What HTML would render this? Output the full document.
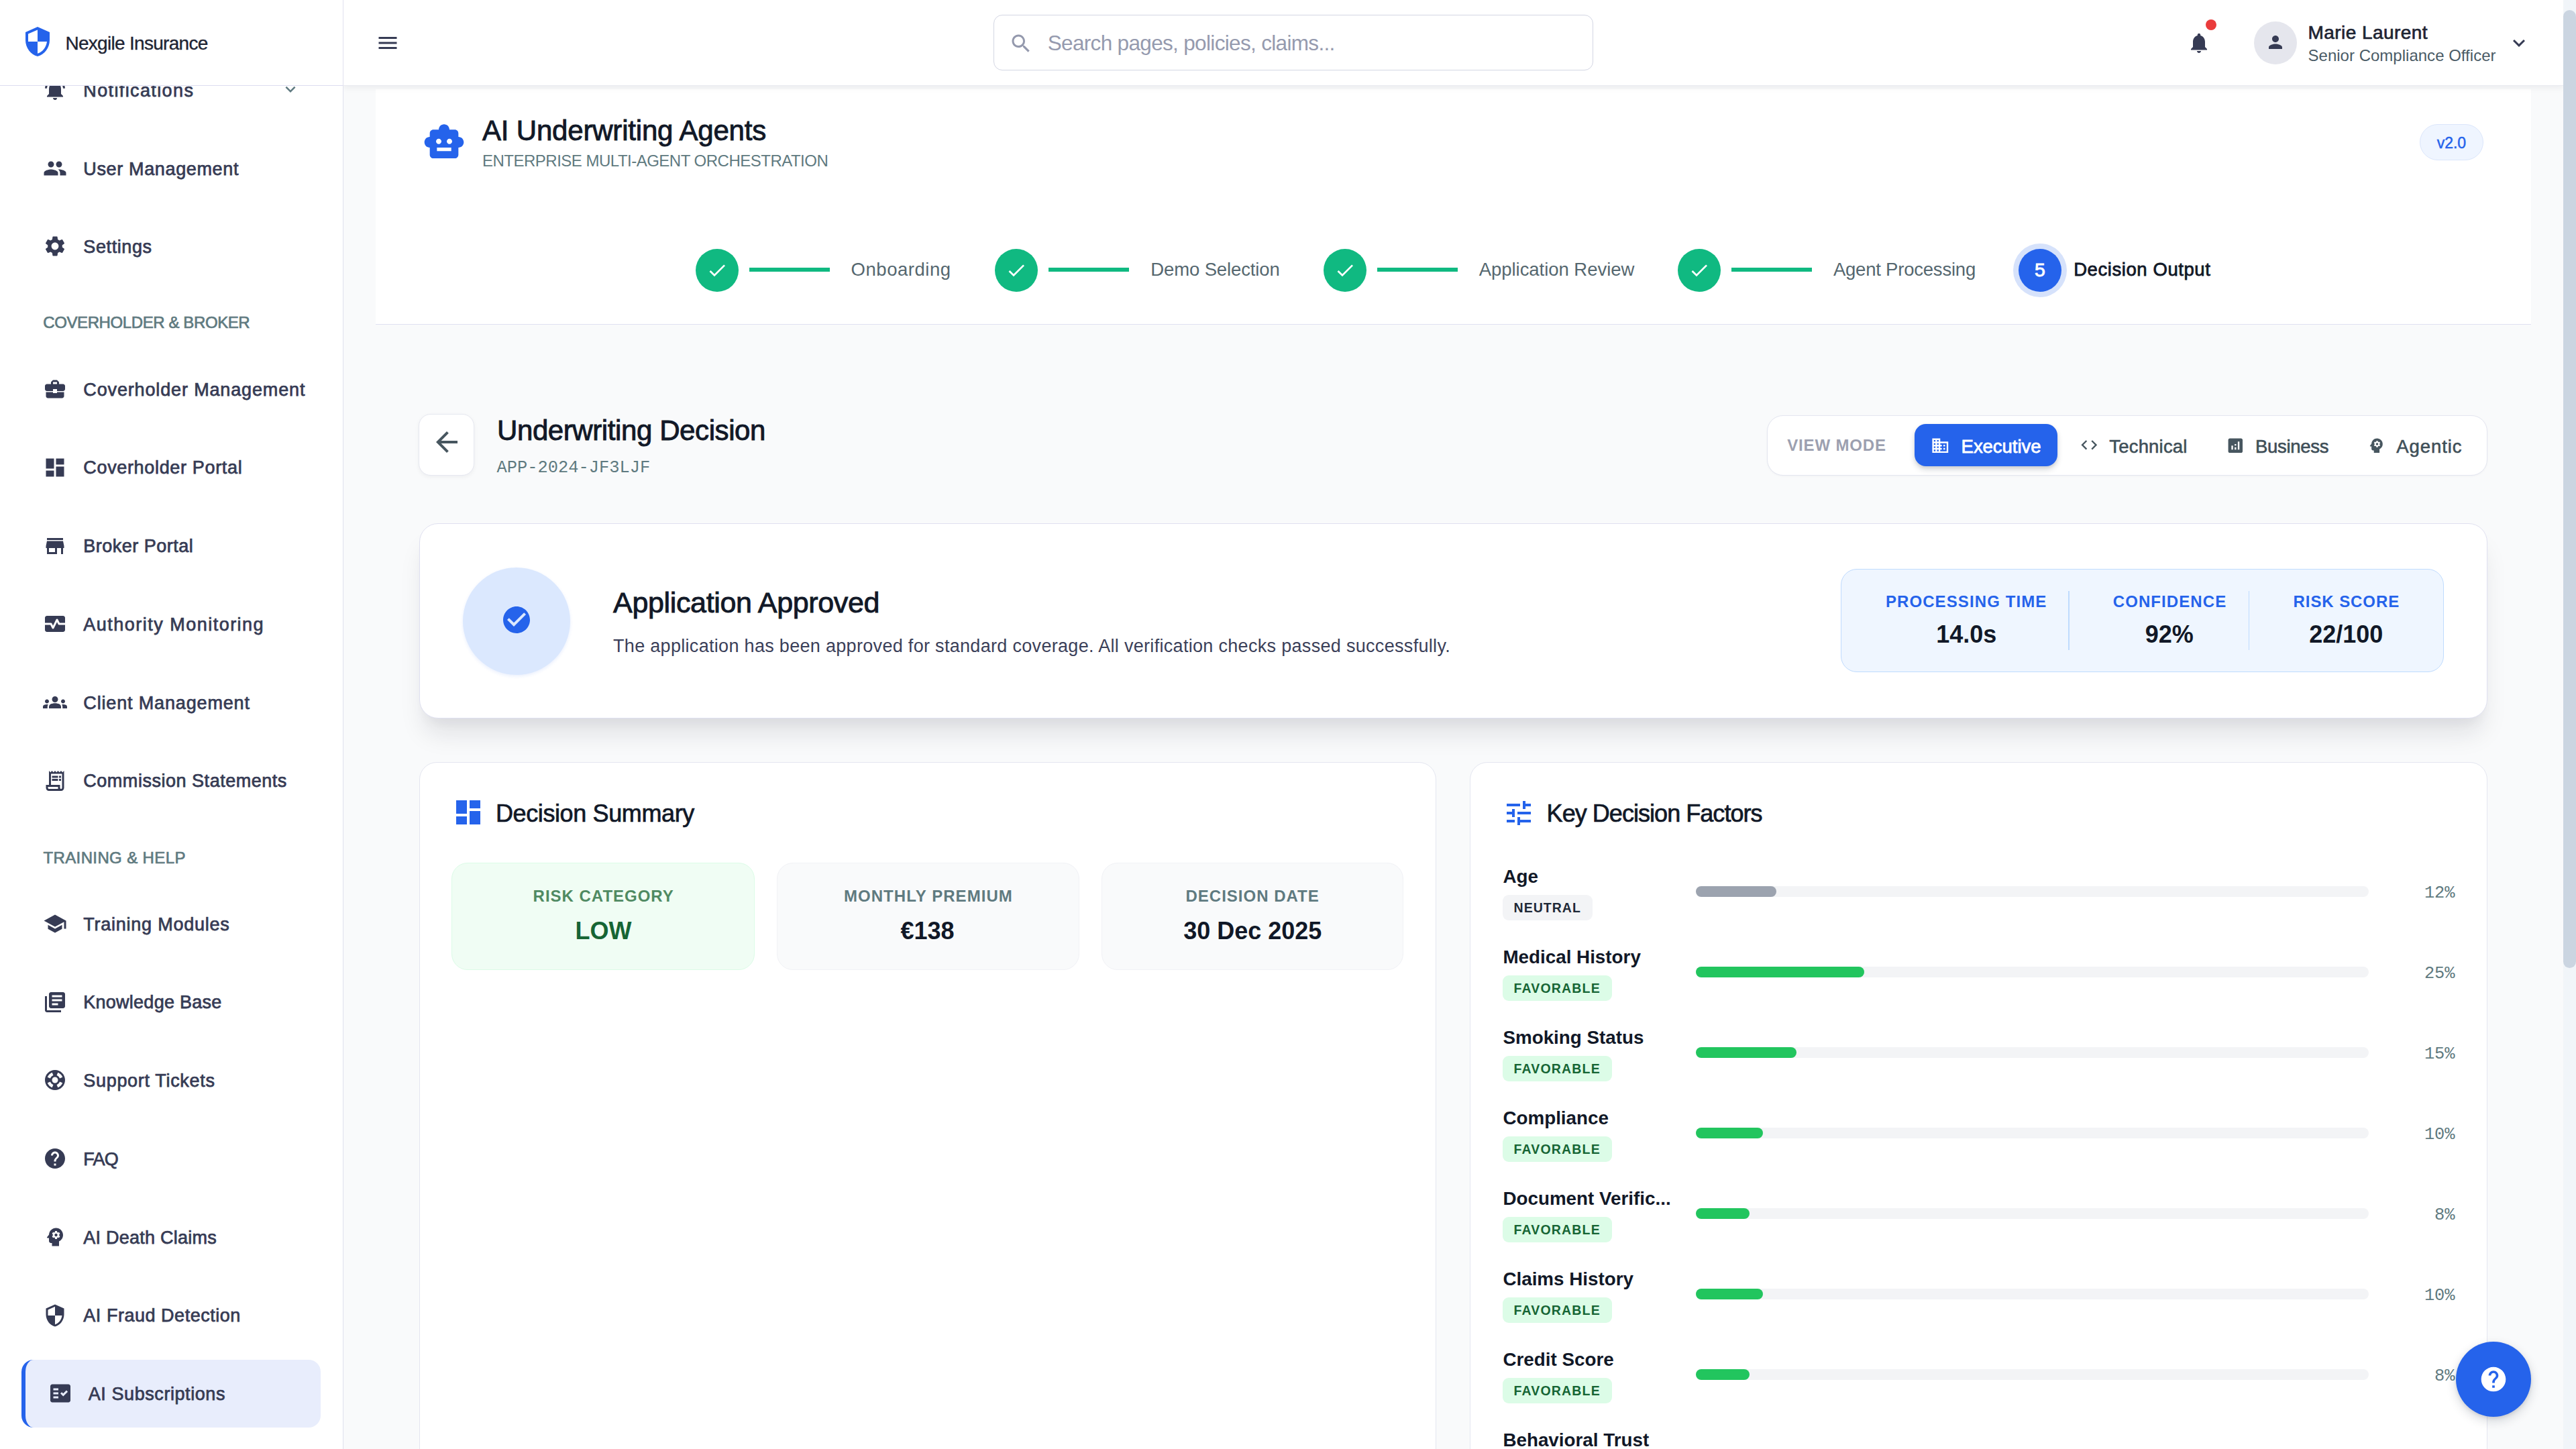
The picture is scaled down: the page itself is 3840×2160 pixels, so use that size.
<!DOCTYPE html>
<html lang="en"><head><meta charset="utf-8"><title>AI Underwriting Agents - Nexgile Insurance</title>
<style>
*{margin:0;padding:0;}
html,body{width:3840px;height:2160px;overflow:hidden;background:#f9fafb;}
body{position:relative;font-family:"Liberation Sans", Arial, sans-serif;}
.t{position:absolute;white-space:nowrap;line-height:1;display:block;}
.m{font-family:"Liberation Mono", "DejaVu Sans Mono", monospace;}
.i{position:absolute;display:block;}
.b{position:absolute;}
.layer{position:absolute;left:0;top:0;width:3840px;height:2160px;}
#main{overflow:hidden;}
#pagehead{position:absolute;left:560px;top:133px;width:3213px;height:349.5px;background:#fff;border-bottom:1.5px solid #dfe1f1;box-sizing:content-box;}
#topbar{position:absolute;left:512px;top:0;width:3309px;height:126.5px;background:#fff;border-bottom:1.5px solid #e9eaf0;box-shadow:0 3px 9px rgba(15,23,42,0.06);}
#sidebar{position:absolute;left:0;top:0;width:510.5px;height:2160px;background:#fff;border-right:1.5px solid #e0e1ee;}
#brand{position:absolute;left:0;top:0;width:510.5px;height:126.5px;border-bottom:1.5px solid #dcdcf0;background:#fff;}
#nav{position:absolute;left:0;top:128px;width:510.5px;height:2032px;overflow:hidden;}
#sbar{position:absolute;left:3821px;top:0;width:19px;height:2160px;background:#f1f5f9;}
#sthumb{position:absolute;left:0;top:15.4px;width:19px;height:1428px;background:#cbd5e1;border-radius:9.5px;}
</style></head>
<body>
<main id="main" class="layer">
<section id="pagehead"></section>
<div class="layer">
<svg class="i" style="left:630.30px;top:179.90px;width:64px;height:64px;" viewBox="0 0 24 24"><path fill="#2563eb" d="M20 9V7c0-1.100-.9-2-2-2h-3c0-1.660-1.340-3-3-3S9 3.340 9 5H6c-1.100 0-2 .9-2 2v2c-1.660 0-3 1.340-3 3s1.340 3 3 3v4c0 1.100.9 2 2 2h12c1.100 0 2-.9 2-2v-4c1.660 0 3-1.340 3-3s-1.340-3-3-3zM7.500 11.500c0-.83.67-1.500 1.500-1.500s1.500.67 1.500 1.500S9.830 13 9 13s-1.500-.67-1.500-1.500zM16 17H8v-2h8v2zm-1-4c-.83 0-1.500-.67-1.500-1.500S14.170 10 15 10s1.500.67 1.500 1.500S15.830 13 15 13z"/></svg>
<span class="t" style="left:719.00px;top:174.30px;font-size:42px;color:#111827;letter-spacing:-0.192px;-webkit-text-stroke:0.9px #111827;">AI Underwriting Agents</span>
<span class="t" style="left:719.00px;top:228.30px;font-size:24px;color:#5f7a80;letter-spacing:-0.503px;">ENTERPRISE MULTI-AGENT ORCHESTRATION</span>
<div class="b" style="left:3606.50px;top:185.30px;width:95.60px;height:54.20px;background:#eff5ff;border:1.5px solid #dbe6fb;border-radius:28px;box-sizing:border-box;"></div>
<span class="t" style="left:3632.65px;top:201.50px;font-size:23px;color:#2563eb;-webkit-text-stroke:0.5px #2563eb;">v2.0</span>
<div class="b" style="left:1037.00px;top:371.00px;width:64.00px;height:64.00px;background:#10b981;border-radius:50%;"></div>
<svg class="i" style="left:1053.00px;top:387.00px;width:32px;height:32px;" viewBox="0 0 24 24"><path fill="#fff" d="M9 16.170L4.830 12l-1.420 1.410L9 19 21 7l-1.410-1.410z"/></svg>
<div class="b" style="left:1117.00px;top:398.70px;width:120.00px;height:6.00px;background:#10b981;"></div>
<span class="t" style="left:1268.60px;top:388.40px;font-size:27.5px;color:#55676f;letter-spacing:0.528px;">Onboarding</span>
<div class="b" style="left:1483.20px;top:371.00px;width:64.00px;height:64.00px;background:#10b981;border-radius:50%;"></div>
<svg class="i" style="left:1499.20px;top:387.00px;width:32px;height:32px;" viewBox="0 0 24 24"><path fill="#fff" d="M9 16.170L4.830 12l-1.420 1.410L9 19 21 7l-1.410-1.410z"/></svg>
<div class="b" style="left:1563.20px;top:398.70px;width:120.00px;height:6.00px;background:#10b981;"></div>
<span class="t" style="left:1715.30px;top:388.40px;font-size:27.5px;color:#55676f;letter-spacing:-0.130px;">Demo Selection</span>
<div class="b" style="left:1973.20px;top:371.00px;width:64.00px;height:64.00px;background:#10b981;border-radius:50%;"></div>
<svg class="i" style="left:1989.20px;top:387.00px;width:32px;height:32px;" viewBox="0 0 24 24"><path fill="#fff" d="M9 16.170L4.830 12l-1.420 1.410L9 19 21 7l-1.410-1.410z"/></svg>
<div class="b" style="left:2053.20px;top:398.70px;width:120.00px;height:6.00px;background:#10b981;"></div>
<span class="t" style="left:2204.70px;top:388.40px;font-size:27.5px;color:#55676f;letter-spacing:-0.041px;">Application Review</span>
<div class="b" style="left:2500.90px;top:371.00px;width:64.00px;height:64.00px;background:#10b981;border-radius:50%;"></div>
<svg class="i" style="left:2516.90px;top:387.00px;width:32px;height:32px;" viewBox="0 0 24 24"><path fill="#fff" d="M9 16.170L4.830 12l-1.420 1.410L9 19 21 7l-1.410-1.410z"/></svg>
<div class="b" style="left:2580.90px;top:398.70px;width:120.00px;height:6.00px;background:#10b981;"></div>
<span class="t" style="left:2732.90px;top:388.40px;font-size:27.5px;color:#55676f;letter-spacing:-0.215px;">Agent Processing</span>
<div class="b" style="left:3008.90px;top:370.80px;width:64.00px;height:64.00px;background:#2563eb;border-radius:50%;box-shadow:0 0 0 8px rgba(37,99,235,0.19);"></div>
<span class="t" style="left:3033.07px;top:387.60px;font-size:28.5px;color:#fff;-webkit-text-stroke:0.9px #fff;">5</span>
<span class="t" style="left:3091.20px;top:388.40px;font-size:27.5px;color:#111827;letter-spacing:0.570px;-webkit-text-stroke:0.8px #111827;">Decision Output</span>
</div>
<div class="layer">
<div class="b" style="left:624.20px;top:617.40px;width:82.40px;height:91.40px;background:#fff;border:1.5px solid #e6e8f0;border-radius:18px;box-sizing:border-box;box-shadow:0 2px 6px rgba(15,23,42,0.05);"></div>
<svg class="i" style="left:641.70px;top:635.00px;width:48px;height:48px;" viewBox="0 0 24 24"><path fill="#47565f" d="M20 11H7.830l5.590-5.590L12 4l-8 8 8 8 1.410-1.410L7.830 13H20v-2z"/></svg>
<span class="t" style="left:741.00px;top:620.70px;font-size:42px;color:#111827;letter-spacing:-0.405px;-webkit-text-stroke:0.9px #111827;">Underwriting Decision</span>
<span class="t m" style="left:740.60px;top:684.60px;font-size:25.4px;color:#5f7a80;">APP-2024-JF3LJF</span>
<div class="b" style="left:2634.40px;top:619.30px;width:1073.40px;height:89.40px;background:#fff;border:1.5px solid #e4e6f0;border-radius:24px;box-sizing:border-box;box-shadow:0 1px 3px rgba(15,23,42,0.04);"></div>
<span class="t" style="left:2664.20px;top:651.90px;font-size:24px;color:#9ca0b0;font-weight:700;letter-spacing:0.843px;">VIEW MODE</span>
<div class="b" style="left:2854.30px;top:631.70px;width:213.00px;height:63.80px;background:#2563eb;border-radius:17px;box-shadow:0 5px 9px rgba(15,23,42,0.16),0 2px 4px rgba(15,23,42,0.08);"></div>
<svg class="i" style="left:2877.70px;top:649.70px;width:28.6px;height:28.6px;" viewBox="0 0 24 24"><path fill="#fff" d="M12 7V3H2v18h20V7H12zM6 19H4v-2h2v2zm0-4H4v-2h2v2zm0-4H4V9h2v2zm0-4H4V5h2v2zm4 12H8v-2h2v2zm0-4H8v-2h2v2zm0-4H8V9h2v2zm0-4H8V5h2v2zm10 12h-8v-2h2v-2h-2v-2h2v-2h-2V9h8v10zm-2-8h-2v2h2v-2zm0 4h-2v2h2v-2z"/></svg>
<span class="t" style="left:2923.60px;top:652.00px;font-size:27.5px;color:#fff;letter-spacing:-0.048px;-webkit-text-stroke:0.8px #fff;">Executive</span>
<svg class="i" style="left:3099.60px;top:648.60px;width:28.6px;height:28.6px;" viewBox="0 0 24 24"><path fill="#47565f" d="M9.400 16.600L4.800 12l4.600-4.600L8 6l-6 6 6 6 1.400-1.400zm5.200 0l4.600-4.600-4.600-4.600L16 6l6 6-6 6-1.400-1.400z"/></svg>
<span class="t" style="left:3144.30px;top:652.00px;font-size:27.5px;color:#3f4f58;letter-spacing:0.183px;-webkit-text-stroke:0.6px #3f4f58;">Technical</span>
<svg class="i" style="left:3317.50px;top:649.50px;width:28.6px;height:28.6px;" viewBox="0 0 24 24"><path fill="#47565f" d="M19 3H5c-1.100 0-2 .9-2 2v14c0 1.100.9 2 2 2h14c1.100 0 2-.9 2-2V5c0-1.100-.9-2-2-2zM9 17H7v-5h2v5zm4 0h-2v-3h2v3zm0-5h-2v-2h2v2zm4 5h-2V7h2v10z"/></svg>
<span class="t" style="left:3362.00px;top:652.00px;font-size:27.5px;color:#3f4f58;letter-spacing:-0.287px;-webkit-text-stroke:0.6px #3f4f58;">Business</span>
<svg class="i" style="left:3528.00px;top:649.70px;width:28.6px;height:28.6px;" viewBox="0 0 24 24"><path fill="#47565f" d="M13 8.570c-.79 0-1.430.64-1.430 1.430s.64 1.430 1.430 1.430 1.430-.64 1.430-1.430-.64-1.430-1.430-1.430z M13 3C9.250 3 6.200 5.940 6.020 9.640L4.100 12.200c-.25.33-.01.8.4.8H6v3c0 1.100.9 2 2 2h1v3h7v-4.680c2.360-1.120 4-3.530 4-6.320 0-3.870-3.130-7-7-7zm3 7c0 .13-.01.26-.02.39l.83.66c.08.06.1.16.05.25l-.8 1.390c-.05.09-.16.12-.24.09l-.99-.4c-.21.16-.43.29-.67.39L14 13.830c-.01.1-.1.17-.2.17h-1.600c-.1 0-.18-.07-.2-.17l-.15-1.060c-.25-.1-.47-.23-.68-.39l-.99.4c-.09.03-.2 0-.25-.09l-.8-1.390c-.05-.08-.03-.19.05-.25l.84-.66c-.01-.13-.02-.26-.02-.39s.02-.27.04-.39l-.85-.66c-.08-.06-.1-.16-.05-.26l.8-1.380c.05-.09.15-.12.24-.09l1 .4c.2-.15.43-.29.67-.39L12 6.170c.02-.1.1-.17.2-.17h1.600c.1 0 .18.07.2.17l.15 1.060c.24.1.46.23.67.39l1-.4c.09-.03.2 0 .24.09l.8 1.380c.05.09.03.2-.05.26l-.85.66c.03.12.04.25.04.39z"/></svg>
<span class="t" style="left:3572.20px;top:652.00px;font-size:27.5px;color:#3f4f58;letter-spacing:0.952px;-webkit-text-stroke:0.6px #3f4f58;">Agentic</span>
</div>
<section class="layer">
<div class="b" style="left:624.60px;top:780.40px;width:3083.20px;height:290.40px;background:#fff;border:1.5px solid #dfe0f0;border-radius:28px;box-sizing:border-box;box-shadow:0 30px 37.5px -7.5px rgba(15,23,42,0.10),0 15px 15px -7.5px rgba(15,23,42,0.04);"></div>
<div class="b" style="left:689.70px;top:846.00px;width:160.00px;height:160.00px;background:#dbe8fe;border-radius:50%;box-shadow:0 2px 5px rgba(37,99,235,0.10);"></div>
<svg class="i" style="left:745.70px;top:900.00px;width:48px;height:48px;" viewBox="0 0 24 24"><path fill="#2563eb" d="M12 2C6.480 2 2 6.480 2 12s4.480 10 10 10 10-4.480 10-10S17.520 2 12 2zm-2 15l-5-5 1.410-1.410L10 14.170l7.590-7.590L19 8l-9 9z"/></svg>
<span class="t" style="left:914.10px;top:877.40px;font-size:43px;color:#111827;letter-spacing:-0.351px;-webkit-text-stroke:0.9px #111827;">Application Approved</span>
<span class="t" style="left:914.00px;top:949.80px;font-size:27px;color:#3b4059;letter-spacing:0.310px;">The application has been approved for standard coverage. All verification checks passed successfully.</span>
<div class="b" style="left:2744.30px;top:848.00px;width:898.50px;height:154.20px;background:#eff6ff;border:1.5px solid #bfdbfe;border-radius:24px;box-sizing:border-box;"></div>
<div class="b" style="left:3083.00px;top:880.50px;width:1.50px;height:88.00px;background:#bfdbfe;"></div>
<div class="b" style="left:3351.80px;top:880.50px;width:1.50px;height:88.00px;background:#bfdbfe;"></div>
<span class="t" style="left:2810.90px;top:885.30px;font-size:24px;color:#2563eb;font-weight:700;letter-spacing:1.098px;">PROCESSING TIME</span>
<span class="t" style="left:2886.15px;top:928.30px;font-size:36px;color:#111827;font-weight:700;">14.0s</span>
<span class="t" style="left:3149.79px;top:885.30px;font-size:24px;color:#2563eb;font-weight:700;letter-spacing:1.083px;">CONFIDENCE</span>
<span class="t" style="left:3197.77px;top:928.30px;font-size:36px;color:#111827;font-weight:700;">92%</span>
<span class="t" style="left:3418.61px;top:885.30px;font-size:24px;color:#2563eb;font-weight:700;letter-spacing:0.914px;">RISK SCORE</span>
<span class="t" style="left:3442.15px;top:928.30px;font-size:36px;color:#111827;font-weight:700;">22/100</span>
</section>
<section class="layer">
<div class="b" style="left:624.50px;top:1136.20px;width:1516.80px;height:1100.00px;background:#fff;border:1.5px solid #e4e6f0;border-radius:26px;box-sizing:border-box;"></div>
<svg class="i" style="left:673.60px;top:1187.00px;width:48px;height:48px;" viewBox="0 0 24 24"><path fill="#2563eb" d="M3 13h8V3H3v10zm0 8h8v-6H3v6zm10 0h8V11h-8v10zm0-18v6h8V3h-8z"/></svg>
<span class="t" style="left:738.90px;top:1195.30px;font-size:36px;color:#111827;letter-spacing:-0.381px;-webkit-text-stroke:0.7px #111827;">Decision Summary</span>
<div class="b" style="left:673.40px;top:1285.90px;width:451.80px;height:159.80px;background:#f0fdf4;border:1.5px solid #dcfce7;border-radius:24px;box-sizing:border-box;"></div>
<div class="b" style="left:1157.50px;top:1285.90px;width:451.70px;height:159.80px;background:#f9fafb;border:1.5px solid #f1f2f6;border-radius:24px;box-sizing:border-box;"></div>
<div class="b" style="left:1641.80px;top:1285.90px;width:450.60px;height:159.80px;background:#f9fafb;border:1.5px solid #f1f2f6;border-radius:24px;box-sizing:border-box;"></div>
<span class="t" style="left:794.59px;top:1324.10px;font-size:24px;color:#4f8a62;font-weight:700;letter-spacing:0.989px;">RISK CATEGORY</span>
<span class="t" style="left:857.61px;top:1369.80px;font-size:36px;color:#166534;font-weight:700;">LOW</span>
<span class="t" style="left:1257.93px;top:1324.10px;font-size:24px;color:#5f7a80;font-weight:700;letter-spacing:1.066px;">MONTHLY PREMIUM</span>
<span class="t" style="left:1342.55px;top:1369.80px;font-size:36px;color:#111827;font-weight:700;">€138</span>
<span class="t" style="left:1767.50px;top:1324.10px;font-size:24px;color:#5f7a80;font-weight:700;letter-spacing:0.997px;">DECISION DATE</span>
<span class="t" style="left:1764.21px;top:1369.80px;font-size:36px;color:#111827;font-weight:700;">30 Dec 2025</span>
</section>
<section class="layer">
<div class="b" style="left:2191.30px;top:1136.40px;width:1516.70px;height:1100.00px;background:#fff;border:1.5px solid #e4e6f0;border-radius:26px;box-sizing:border-box;"></div>
<svg class="i" style="left:2240.00px;top:1188.00px;width:48px;height:48px;" viewBox="0 0 24 24"><path fill="#2563eb" d="M3 17v2h6v-2H3zM3 5v2h10V5H3zm10 16v-2h8v-2h-8v-2h-2v6h2zM7 9v2H3v2h4v2h2V9H7zm14 4v-2H11v2h10zm-6-4h2V7h4V5h-4V3h-2v6z"/></svg>
<span class="t" style="left:2305.60px;top:1195.30px;font-size:36px;color:#111827;letter-spacing:-0.956px;-webkit-text-stroke:0.7px #111827;">Key Decision Factors</span>
<span class="t" style="left:2240.40px;top:1292.90px;font-size:27.8px;color:#111827;font-weight:700;">Age</span>
<div class="b" style="left:2240.00px;top:1334.00px;width:134.20px;height:38.40px;background:#f3f4f6;border-radius:9px;"></div>
<span class="t" style="left:2256.60px;top:1344.10px;font-size:19.5px;color:#1f2937;font-weight:700;letter-spacing:1.018px;">NEUTRAL</span>
<div class="b" style="left:2527.80px;top:1321.20px;width:1003.20px;height:16.00px;background:#f3f4f6;border-radius:8px;"></div>
<div class="b" style="left:2527.80px;top:1321.20px;width:120.38px;height:16.00px;background:#9ca3af;border-radius:8px;"></div>
<span class="t m" style="left:3613.88px;top:1319.30px;font-size:25.4px;color:#5f7a80;">12%</span>
<span class="t" style="left:2240.40px;top:1412.90px;font-size:27.8px;color:#111827;font-weight:700;">Medical History</span>
<div class="b" style="left:2240.00px;top:1454.00px;width:163.00px;height:38.40px;background:#dcfce7;border-radius:9px;"></div>
<span class="t" style="left:2256.60px;top:1464.10px;font-size:19.5px;color:#166534;font-weight:700;letter-spacing:1.154px;">FAVORABLE</span>
<div class="b" style="left:2527.80px;top:1441.20px;width:1003.20px;height:16.00px;background:#f3f4f6;border-radius:8px;"></div>
<div class="b" style="left:2527.80px;top:1441.20px;width:250.80px;height:16.00px;background:#22c55e;border-radius:8px;"></div>
<span class="t m" style="left:3613.88px;top:1439.30px;font-size:25.4px;color:#5f7a80;">25%</span>
<span class="t" style="left:2240.40px;top:1532.90px;font-size:27.8px;color:#111827;font-weight:700;">Smoking Status</span>
<div class="b" style="left:2240.00px;top:1574.00px;width:163.00px;height:38.40px;background:#dcfce7;border-radius:9px;"></div>
<span class="t" style="left:2256.60px;top:1584.10px;font-size:19.5px;color:#166534;font-weight:700;letter-spacing:1.154px;">FAVORABLE</span>
<div class="b" style="left:2527.80px;top:1561.20px;width:1003.20px;height:16.00px;background:#f3f4f6;border-radius:8px;"></div>
<div class="b" style="left:2527.80px;top:1561.20px;width:150.48px;height:16.00px;background:#22c55e;border-radius:8px;"></div>
<span class="t m" style="left:3613.88px;top:1559.30px;font-size:25.4px;color:#5f7a80;">15%</span>
<span class="t" style="left:2240.40px;top:1652.90px;font-size:27.8px;color:#111827;font-weight:700;">Compliance</span>
<div class="b" style="left:2240.00px;top:1694.00px;width:163.00px;height:38.40px;background:#dcfce7;border-radius:9px;"></div>
<span class="t" style="left:2256.60px;top:1704.10px;font-size:19.5px;color:#166534;font-weight:700;letter-spacing:1.154px;">FAVORABLE</span>
<div class="b" style="left:2527.80px;top:1681.20px;width:1003.20px;height:16.00px;background:#f3f4f6;border-radius:8px;"></div>
<div class="b" style="left:2527.80px;top:1681.20px;width:100.32px;height:16.00px;background:#22c55e;border-radius:8px;"></div>
<span class="t m" style="left:3613.88px;top:1679.30px;font-size:25.4px;color:#5f7a80;">10%</span>
<span class="t" style="left:2240.40px;top:1772.90px;font-size:27.8px;color:#111827;font-weight:700;">Document Verific...</span>
<div class="b" style="left:2240.00px;top:1814.00px;width:163.00px;height:38.40px;background:#dcfce7;border-radius:9px;"></div>
<span class="t" style="left:2256.60px;top:1824.10px;font-size:19.5px;color:#166534;font-weight:700;letter-spacing:1.154px;">FAVORABLE</span>
<div class="b" style="left:2527.80px;top:1801.20px;width:1003.20px;height:16.00px;background:#f3f4f6;border-radius:8px;"></div>
<div class="b" style="left:2527.80px;top:1801.20px;width:80.26px;height:16.00px;background:#22c55e;border-radius:8px;"></div>
<span class="t m" style="left:3629.12px;top:1799.30px;font-size:25.4px;color:#5f7a80;">8%</span>
<span class="t" style="left:2240.40px;top:1892.90px;font-size:27.8px;color:#111827;font-weight:700;">Claims History</span>
<div class="b" style="left:2240.00px;top:1934.00px;width:163.00px;height:38.40px;background:#dcfce7;border-radius:9px;"></div>
<span class="t" style="left:2256.60px;top:1944.10px;font-size:19.5px;color:#166534;font-weight:700;letter-spacing:1.154px;">FAVORABLE</span>
<div class="b" style="left:2527.80px;top:1921.20px;width:1003.20px;height:16.00px;background:#f3f4f6;border-radius:8px;"></div>
<div class="b" style="left:2527.80px;top:1921.20px;width:100.32px;height:16.00px;background:#22c55e;border-radius:8px;"></div>
<span class="t m" style="left:3613.88px;top:1919.30px;font-size:25.4px;color:#5f7a80;">10%</span>
<span class="t" style="left:2240.40px;top:2012.90px;font-size:27.8px;color:#111827;font-weight:700;">Credit Score</span>
<div class="b" style="left:2240.00px;top:2054.00px;width:163.00px;height:38.40px;background:#dcfce7;border-radius:9px;"></div>
<span class="t" style="left:2256.60px;top:2064.10px;font-size:19.5px;color:#166534;font-weight:700;letter-spacing:1.154px;">FAVORABLE</span>
<div class="b" style="left:2527.80px;top:2041.20px;width:1003.20px;height:16.00px;background:#f3f4f6;border-radius:8px;"></div>
<div class="b" style="left:2527.80px;top:2041.20px;width:80.26px;height:16.00px;background:#22c55e;border-radius:8px;"></div>
<span class="t m" style="left:3629.12px;top:2039.30px;font-size:25.4px;color:#5f7a80;">8%</span>
<span class="t" style="left:2240.40px;top:2132.90px;font-size:27.8px;color:#111827;font-weight:700;">Behavioral Trust</span>
</section>
</main>
<header id="topbar"></header>
<div class="layer" style="height:128px;">
<svg class="i" style="left:559.50px;top:46.20px;width:36px;height:36px;" viewBox="0 0 24 24"><path fill="#363b54" d="M3 18h18v-2H3v2zm0-5h18v-2H3v2zm0-7v2h18V6H3z"/></svg>
<div class="b" style="left:1480.50px;top:22.40px;width:894.70px;height:83.00px;border:1.5px solid #d3d6e3;border-radius:13px;box-sizing:border-box;background:#fff;"></div>
<svg class="i" style="left:1503.80px;top:46.50px;width:36px;height:36px;" viewBox="0 0 24 24"><path fill="#9499ad" d="M15.5 14h-.79l-.28-.27C15.41 12.59 16 11.11 16 9.5 16 5.91 13.09 3 9.5 3S3 5.91 3 9.5 5.91 16 9.5 16c1.61 0 3.09-.59 4.23-1.57l.27.28v.79l5 4.99L20.49 19l-4.99-5zm-6 0C7.01 14 5 11.99 5 9.5S7.01 5 9.5 5 14 7.01 14 9.5 11.99 14 9.5 14z"/></svg>
<span class="t" style="left:1561.70px;top:48.50px;font-size:31.5px;color:#959aae;letter-spacing:-0.665px;">Search pages, policies, claims...</span>
<svg class="i" style="left:3259.60px;top:46.00px;width:36px;height:36px;" viewBox="0 0 24 24"><path fill="#363b54" d="M12 22c1.1 0 2-.9 2-2h-4c0 1.1.89 2 2 2zm6-6v-5c0-3.07-1.64-5.64-4.5-6.32V4c0-.83-.67-1.5-1.5-1.5s-1.5.67-1.5 1.5v.68C7.63 5.36 6 7.92 6 11v5l-2 2v1h16v-1l-2-2z"/></svg>
<div class="b" style="left:3288.00px;top:29.00px;width:16.30px;height:16.30px;background:#ea3c3c;border-radius:50%;"></div>
<div class="b" style="left:3360.00px;top:32.00px;width:64.00px;height:64.00px;background:#e5e6ed;border-radius:50%;"></div>
<svg class="i" style="left:3377.00px;top:48.00px;width:30px;height:30px;" viewBox="0 0 24 24"><path fill="#363b54" d="M12 12c2.21 0 4-1.79 4-4s-1.79-4-4-4-4 1.79-4 4 1.79 4 4 4zm0 2c-2.67 0-8 1.34-8 4v2h16v-2c0-2.66-5.33-4-8-4z"/></svg>
<span class="t" style="left:3440.50px;top:35.40px;font-size:28px;color:#1e2433;letter-spacing:0.433px;-webkit-text-stroke:0.7px #1e2433;">Marie Laurent</span>
<span class="t" style="left:3440.50px;top:71.20px;font-size:24px;color:#4a5b66;letter-spacing:0.013px;">Senior Compliance Officer</span>
<svg class="i" style="left:3736.80px;top:46.10px;width:36px;height:36px;" viewBox="0 0 24 24"><path fill="#363b54" d="M16.59 8.59L12 13.17 7.41 8.59 6 10l6 6 6-6z"/></svg>
</div>
<aside id="sidebar">
<nav id="nav">
<svg class="i" style="left:64.00px;top:-11.70px;width:36px;height:36px;" viewBox="0 0 24 24"><path fill="#363b54" d="M7.58 4.08L6.15 2.65C3.75 4.48 2.17 7.3 2.03 10.5h2c.15-2.65 1.51-4.97 3.55-6.42zm12.39 6.42h2c-.15-3.2-1.73-6.02-4.12-7.85l-1.42 1.43c2.02 1.45 3.39 3.77 3.54 6.42zM18 11c0-3.07-1.64-5.64-4.5-6.32V4c0-.83-.67-1.5-1.5-1.5s-1.5.67-1.5 1.5v.68C7.63 5.36 6 7.92 6 11v5l-2 2v1h16v-1l-2-2v-5zm-6 11c.14 0 .27-.01.4-.04.65-.14 1.18-.58 1.44-1.18.1-.24.15-.5.15-.78h-4c.01 1.1.9 2 2.01 2z"/></svg>
<span class="t" style="left:124.30px;top:-6.00px;font-size:27px;color:#363b54;letter-spacing:1.379px;-webkit-text-stroke:0.75px #363b54;">Notifications</span>
<svg class="i" style="left:64.00px;top:105.00px;width:36px;height:36px;" viewBox="0 0 24 24"><path fill="#363b54" d="M16 11c1.66 0 2.99-1.34 2.99-3S17.66 5 16 5c-1.66 0-3 1.34-3 3s1.34 3 3 3zm-8 0c1.66 0 2.99-1.34 2.99-3S9.66 5 8 5C6.34 5 5 6.34 5 8s1.34 3 3 3zm0 2c-2.33 0-7 1.17-7 3.5V19h14v-2.500c0-2.33-4.67-3.5-7-3.5zm8 0c-.29 0-.62.02-.97.05 1.16.84 1.97 1.97 1.97 3.45V19h6v-2.500c0-2.33-4.67-3.5-7-3.5z"/></svg>
<span class="t" style="left:124.30px;top:110.70px;font-size:27px;color:#363b54;letter-spacing:0.646px;-webkit-text-stroke:0.75px #363b54;">User Management</span>
<svg class="i" style="left:64.00px;top:221.10px;width:36px;height:36px;" viewBox="0 0 24 24"><path fill="#363b54" d="M19.14 12.94c.04-.3.06-.61.06-.94 0-.32-.02-.64-.07-.94l2.03-1.58c.18-.14.23-.41.12-.61l-1.92-3.32c-.12-.22-.37-.29-.59-.22l-2.39.96c-.5-.38-1.03-.7-1.62-.94l-.36-2.54c-.04-.24-.24-.41-.48-.41h-3.84c-.24 0-.43.17-.47.41l-.36 2.54c-.59.24-1.13.57-1.62.94l-2.39-.96c-.22-.08-.47 0-.59.22L2.74 8.87c-.12.21-.08.47.12.61l2.03 1.58c-.05.3-.09.63-.09.94s.02.64.07.94l-2.03 1.58c-.18.14-.23.41-.12.61l1.92 3.32c.12.22.37.29.59.22l2.39-.96c.5.38 1.03.7 1.62.94l.36 2.54c.05.24.24.41.48.41h3.84c.24 0 .44-.17.47-.41l.36-2.54c.59-.24 1.13-.56 1.62-.94l2.39.96c.22.08.47 0 .59-.22l1.92-3.32c.12-.22.07-.47-.12-.61l-2.01-1.58zM12 15.6c-1.98 0-3.6-1.62-3.6-3.6s1.62-3.6 3.6-3.6 3.6 1.62 3.6 3.6-1.62 3.6-3.6 3.6z"/></svg>
<span class="t" style="left:124.30px;top:226.80px;font-size:27px;color:#363b54;letter-spacing:0.605px;-webkit-text-stroke:0.75px #363b54;">Settings</span>
<svg class="i" style="left:417.80px;top:-10.00px;width:30px;height:30px;" viewBox="0 0 24 24"><path fill="#5f7a80" d="M16.59 8.59L12 13.17 7.41 8.59 6 10l6 6 6-6z"/></svg>
<span class="t" style="left:64.30px;top:341.30px;font-size:24px;color:#5f7a80;letter-spacing:-0.404px;-webkit-text-stroke:0.7px #5f7a80;">COVERHOLDER &amp; BROKER</span>
<svg class="i" style="left:64.00px;top:434.00px;width:36px;height:36px;" viewBox="0 0 24 24"><path fill="#363b54" d="M10 16v-1H3.01L3 19c0 1.11.89 2 2 2h14c1.11 0 2-.89 2-2v-4h-7v1h-4zm10-9h-4.010V5l-2-2h-4l-2 2v2H4c-1.1 0-2 .9-2 2v3c0 1.11.89 2 2 2h6v-2h4v2h6c1.1 0 2-.9 2-2V9c0-1.1-.9-2-2-2zm-6 0h-4V5h4v2z"/></svg>
<span class="t" style="left:124.30px;top:439.70px;font-size:27px;color:#363b54;letter-spacing:0.855px;-webkit-text-stroke:0.75px #363b54;">Coverholder Management</span>
<svg class="i" style="left:64.00px;top:550.75px;width:36px;height:36px;" viewBox="0 0 24 24"><path fill="#363b54" d="M3 13h8V3H3v10zm0 8h8v-6H3v6zm10 0h8V11h-8v10zm0-18v6h8V3h-8z"/></svg>
<span class="t" style="left:124.30px;top:556.45px;font-size:27px;color:#363b54;letter-spacing:0.660px;-webkit-text-stroke:0.75px #363b54;">Coverholder Portal</span>
<svg class="i" style="left:64.00px;top:667.50px;width:36px;height:36px;" viewBox="0 0 24 24"><path fill="#363b54" d="M20 4H4v2h16V4zm1 10v-2l-1-5H4l-1 5v2h1v6h10v-6h4v6h2v-6h1zm-9 4H6v-4h6v4z"/></svg>
<span class="t" style="left:124.30px;top:673.20px;font-size:27px;color:#363b54;letter-spacing:0.495px;-webkit-text-stroke:0.75px #363b54;">Broker Portal</span>
<svg class="i" style="left:64.00px;top:784.25px;width:36px;height:36px;" viewBox="0 0 24 24"><path fill="#363b54" d="M15.11 12.45L14 10.240l-3.110 6.210c-.16.34-.51.55-.89.55s-.73-.21-.89-.55L7.380 13H2v5c0 1.1.9 2 2 2h16c1.1 0 2-.9 2-2v-5h-6c-.38 0-.73-.21-.89-.55z M20 4H4c-1.100 0-2 .9-2 2v5h6c.38 0 .73.21.89.55L10 13.760l3.110-6.210c.34-.68 1.45-.68 1.79 0L16.620 11H22V6c0-1.100-.9-2-2-2z"/></svg>
<span class="t" style="left:124.30px;top:789.95px;font-size:27px;color:#363b54;letter-spacing:1.484px;-webkit-text-stroke:0.75px #363b54;">Authority Monitoring</span>
<svg class="i" style="left:64.00px;top:901.00px;width:36px;height:36px;" viewBox="0 0 24 24"><path fill="#363b54" d="M12 12.750c1.63 0 3.070.39 4.240.9 1.080.48 1.760 1.560 1.760 2.730V18H6v-1.610c0-1.180.68-2.260 1.760-2.730 1.170-.52 2.610-.91 4.240-.91zM4 13c1.100 0 2-.9 2-2s-.9-2-2-2-2 .9-2 2 .9 2 2 2zm1.130 1.100c-.37-.06-.74-.1-1.130-.1-.99 0-1.930.21-2.780.58C.48 14.900 0 15.620 0 16.430V18h4.500v-1.610c0-.83.23-1.610.63-2.290zM20 13c1.100 0 2-.9 2-2s-.9-2-2-2-2 .9-2 2 .9 2 2 2zm4 3.430c0-.81-.48-1.530-1.220-1.850-.85-.37-1.790-.58-2.780-.58-.39 0-.76.04-1.130.1.4.68.63 1.460.63 2.290V18H24v-1.570zM12 6c1.660 0 3 1.340 3 3s-1.340 3-3 3-3-1.340-3-3 1.340-3 3-3z"/></svg>
<span class="t" style="left:124.30px;top:906.70px;font-size:27px;color:#363b54;letter-spacing:0.845px;-webkit-text-stroke:0.75px #363b54;">Client Management</span>
<svg class="i" style="left:64.00px;top:1017.75px;width:36px;height:36px;" viewBox="0 0 24 24"><path fill="#363b54" d="M19.5 3.5L18 2l-1.5 1.5L15 2l-1.5 1.5L12 2l-1.5 1.5L9 2 7.5 3.5 6 2v14H3v3c0 1.660 1.340 3 3 3h12c1.660 0 3-1.340 3-3V2l-1.500 1.500zM15 20H6c-.55 0-1-.45-1-1v-1h10v2zm4-1c0 .55-.45 1-1 1s-1-.45-1-1v-3H8V5h11v14z M9 7h6v2H9zM16 7h2v2h-2zM9 10h6v2H9zM16 10h2v2h-2z"/></svg>
<span class="t" style="left:124.30px;top:1023.45px;font-size:27px;color:#363b54;letter-spacing:0.523px;-webkit-text-stroke:0.75px #363b54;">Commission Statements</span>
<span class="t" style="left:64.50px;top:1138.50px;font-size:24px;color:#5f7a80;letter-spacing:0.372px;-webkit-text-stroke:0.7px #5f7a80;">TRAINING &amp; HELP</span>
<svg class="i" style="left:64.00px;top:1230.90px;width:36px;height:36px;" viewBox="0 0 24 24"><path fill="#363b54" d="M5 13.180v4L12 21l7-3.820v-4L12 17l-7-3.820zM12 3L1 9l11 6 9-4.910V17h2V9L12 3z"/></svg>
<span class="t" style="left:124.30px;top:1236.60px;font-size:27px;color:#363b54;letter-spacing:0.756px;-webkit-text-stroke:0.75px #363b54;">Training Modules</span>
<svg class="i" style="left:64.00px;top:1347.65px;width:36px;height:36px;" viewBox="0 0 24 24"><path fill="#363b54" d="M4 6H2v14c0 1.100.9 2 2 2h14v-2H4V6zm16-4H8c-1.100 0-2 .9-2 2v12c0 1.100.9 2 2 2h12c1.100 0 2-.9 2-2V4c0-1.100-.9-2-2-2zm-1 9H9V9h10v2zm-4 4H9v-2h6v2zm4-8H9V5h10v2z"/></svg>
<span class="t" style="left:124.30px;top:1353.35px;font-size:27px;color:#363b54;letter-spacing:0.253px;-webkit-text-stroke:0.75px #363b54;">Knowledge Base</span>
<svg class="i" style="left:64.00px;top:1464.40px;width:36px;height:36px;" viewBox="0 0 24 24"><path fill="#363b54" d="M12 2C6.480 2 2 6.480 2 12s4.480 10 10 10 10-4.480 10-10S17.520 2 12 2zm7.460 7.120l-2.780 1.150c-.51-1.360-1.580-2.440-2.950-2.940l1.150-2.780c2.100.8 3.770 2.470 4.580 4.570zM12 15c-1.660 0-3-1.340-3-3s1.340-3 3-3 3 1.340 3 3-1.340 3-3 3zM9.130 4.540l1.170 2.780c-1.380.5-2.470 1.590-2.980 2.970L4.540 9.130c.81-2.110 2.480-3.780 4.590-4.590zM4.540 14.870l2.780-1.150c.51 1.380 1.590 2.460 2.970 2.960l-1.170 2.780c-2.100-.81-3.770-2.480-4.580-4.590zm10.340 4.590l-1.150-2.780c1.370-.51 2.450-1.590 2.950-2.970l2.780 1.170c-.81 2.100-2.480 3.770-4.580 4.580z"/></svg>
<span class="t" style="left:124.30px;top:1470.10px;font-size:27px;color:#363b54;letter-spacing:0.680px;-webkit-text-stroke:0.75px #363b54;">Support Tickets</span>
<svg class="i" style="left:64.00px;top:1581.15px;width:36px;height:36px;" viewBox="0 0 24 24"><path fill="#363b54" d="M12 2C6.480 2 2 6.480 2 12s4.480 10 10 10 10-4.480 10-10S17.520 2 12 2zm1 17h-2v-2h2v2zm2.070-7.750l-.9.92C13.450 12.900 13 13.500 13 15h-2v-.5c0-1.100.45-2.100 1.170-2.830l1.240-1.260c.37-.36.59-.86.59-1.410 0-1.100-.9-2-2-2s-2 .9-2 2H8c0-2.210 1.790-4 4-4s4 1.790 4 4c0 .88-.36 1.680-.93 2.250z"/></svg>
<span class="t" style="left:124.30px;top:1586.85px;font-size:27px;color:#363b54;letter-spacing:-0.772px;-webkit-text-stroke:0.75px #363b54;">FAQ</span>
<svg class="i" style="left:64.00px;top:1697.90px;width:36px;height:36px;" viewBox="0 0 24 24"><path fill="#363b54" d="M13 8.570c-.79 0-1.430.64-1.430 1.430s.64 1.430 1.430 1.430 1.430-.64 1.430-1.430-.64-1.430-1.430-1.430z M13 3C9.250 3 6.200 5.940 6.020 9.640L4.100 12.200c-.25.33-.01.8.4.8H6v3c0 1.100.9 2 2 2h1v3h7v-4.680c2.360-1.120 4-3.530 4-6.320 0-3.870-3.130-7-7-7zm3 7c0 .13-.01.26-.02.39l.83.66c.08.06.1.16.05.25l-.8 1.390c-.05.09-.16.12-.24.09l-.99-.4c-.21.16-.43.29-.67.39L14 13.830c-.01.1-.1.17-.2.17h-1.600c-.1 0-.18-.07-.2-.17l-.15-1.060c-.25-.1-.47-.23-.68-.39l-.99.4c-.09.03-.2 0-.25-.09l-.8-1.390c-.05-.08-.03-.19.05-.25l.84-.66c-.01-.13-.02-.26-.02-.39s.02-.27.04-.39l-.85-.66c-.08-.06-.1-.16-.05-.26l.8-1.380c.05-.09.15-.12.24-.09l1 .4c.2-.15.43-.29.67-.39L12 6.170c.02-.1.1-.17.2-.17h1.600c.1 0 .18.07.2.17l.15 1.060c.24.1.46.23.67.39l1-.4c.09-.03.2 0 .24.09l.8 1.380c.05.09.03.2-.05.26l-.85.66c.03.12.04.25.04.39z"/></svg>
<span class="t" style="left:124.30px;top:1703.60px;font-size:27px;color:#363b54;letter-spacing:0.248px;-webkit-text-stroke:0.75px #363b54;">AI Death Claims</span>
<svg class="i" style="left:64.00px;top:1814.65px;width:36px;height:36px;" viewBox="0 0 24 24"><path fill="#363b54" d="M12 1L3 5v6c0 5.550 3.840 10.740 9 12 5.160-1.260 9-6.450 9-12V5l-9-4zm0 10.990h7c-.53 4.120-3.280 7.790-7 8.940V12H5V6.300l7-3.110v8.800z"/></svg>
<span class="t" style="left:124.30px;top:1820.35px;font-size:27px;color:#363b54;letter-spacing:0.526px;-webkit-text-stroke:0.75px #363b54;">AI Fraud Detection</span>
<div class="b" style="left:32.00px;top:1899.20px;width:446.00px;height:100.40px;background:#e8edfc;border-radius:18px;border-left:6.5px solid #2563eb;box-sizing:border-box;"></div>
<svg class="i" style="left:71.50px;top:1931.40px;width:36px;height:36px;" viewBox="0 0 24 24"><path fill="#363b54" d="M20 3H4c-1.100 0-2 .9-2 2v14c0 1.100.9 2 2 2h16c1.100 0 2-.9 2-2V5c0-1.100-.9-2-2-2zM10 17H5v-2h5v2zm0-4H5v-2h5v2zm0-4H5V7h5v2zm4.820 6L12 12.160l1.410-1.410 1.410 1.420L17.990 9l1.420 1.420L14.820 15z"/></svg>
<span class="t" style="left:131.80px;top:1937.10px;font-size:27px;color:#363b54;letter-spacing:0.569px;-webkit-text-stroke:0.75px #363b54;">AI Subscriptions</span>
</nav>
<div id="brand">
<svg class="i" style="left:32.00px;top:38.00px;width:48px;height:48px;" viewBox="0 0 24 24"><path fill="#2563eb" d="M12 1L3 5v6c0 5.550 3.840 10.740 9 12 5.160-1.260 9-6.450 9-12V5l-9-4zm0 10.990h7c-.53 4.120-3.280 7.790-7 8.940V12H5V6.300l7-3.110v8.800z"/></svg>
<span class="t" style="left:97.40px;top:50.80px;font-size:28px;color:#1e2433;letter-spacing:-0.701px;-webkit-text-stroke:0.35px #1e2433;">Nexgile Insurance</span>
</div>
</aside>
<div class="layer" style="pointer-events:none;">
<div class="b" style="left:3661.00px;top:2000.00px;width:112.00px;height:112.00px;background:#2563eb;border-radius:50%;box-shadow:0 6px 16px rgba(15,23,42,0.16),0 2px 5px rgba(15,23,42,0.10);"></div>
<svg class="i" style="left:3694.80px;top:2034.00px;width:44px;height:44px;" viewBox="0 0 24 24"><path fill="#fff" d="M12 2C6.480 2 2 6.480 2 12s4.480 10 10 10 10-4.480 10-10S17.520 2 12 2zm1 17h-2v-2h2v2zm2.070-7.750l-.9.92C13.450 12.900 13 13.500 13 15h-2v-.5c0-1.100.45-2.100 1.170-2.830l1.240-1.260c.37-.36.59-.86.59-1.410 0-1.100-.9-2-2-2s-2 .9-2 2H8c0-2.210 1.790-4 4-4s4 1.790 4 4c0 .88-.36 1.680-.93 2.250z"/></svg>
</div>
<div id="sbar"><div id="sthumb"></div></div>
<script>(function(){var w=window.innerWidth||0;if(w>200&&Math.abs(w-3840)>2){document.documentElement.style.zoom=(w/3840);}})();</script>
</body></html>
